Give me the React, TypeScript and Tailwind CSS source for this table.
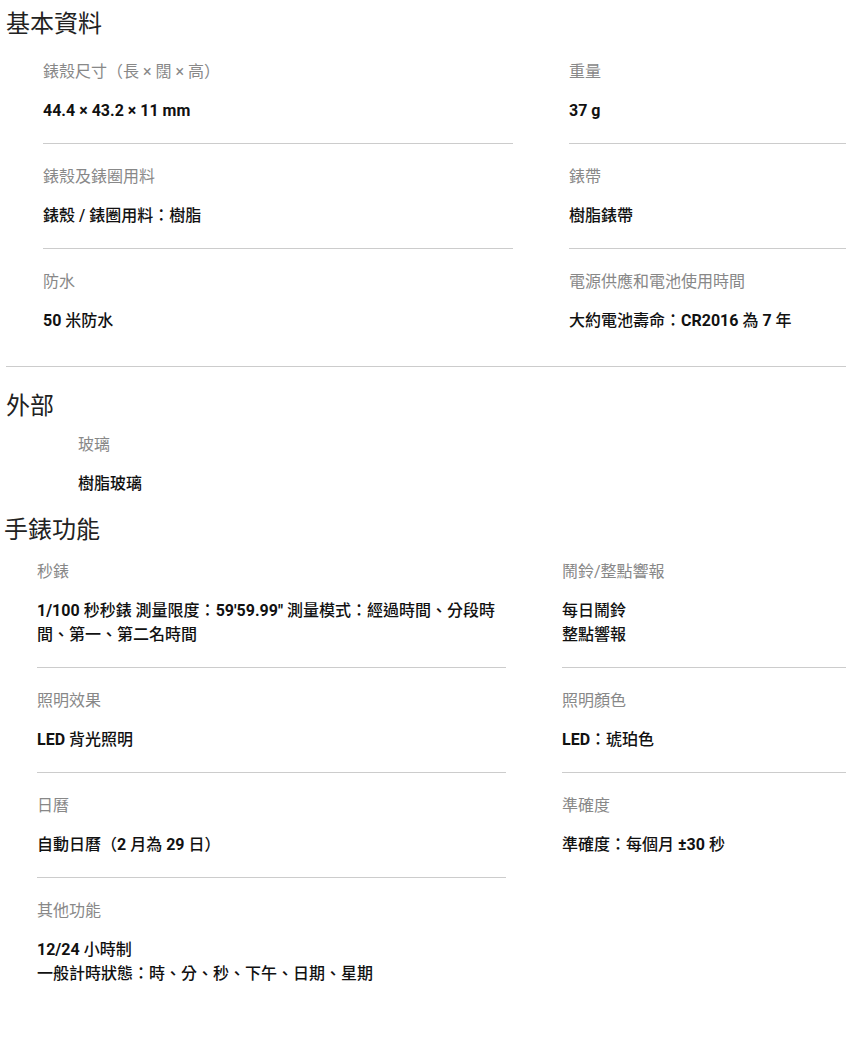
type Spec = { label: string; lines: string[] };

const basic: Spec[] = [
  { label: '錶殼尺寸（長 × 闊 × 高）', lines: ['44.4 × 43.2 × 11 mm'] },
  { label: '重量', lines: ['37 g'] },
  { label: '錶殼及錶圈用料', lines: ['錶殼 / 錶圈用料：樹脂'] },
  { label: '錶帶', lines: ['樹脂錶帶'] },
  { label: '防水', lines: ['50 米防水'] },
  { label: '電源供應和電池使用時間', lines: ['大約電池壽命：CR2016 為 7 年'] },
];

const functions: Spec[] = [
  {
    label: '秒錶',
    lines: ['1/100 秒秒錶 測量限度：59\'59.99" 測量模式：經過時間、分段時間、第一、第二名時間'],
  },
  { label: '鬧鈴/整點響報', lines: ['每日鬧鈴', '整點響報'] },
  { label: '照明效果', lines: ['LED 背光照明'] },
  { label: '照明顏色', lines: ['LED：琥珀色'] },
  { label: '日曆', lines: ['自動日曆（2 月為 29 日）'] },
  { label: '準確度', lines: ['準確度：每個月 ±30 秒'] },
  { label: '其他功能', lines: ['12/24 小時制', '一般計時狀態：時、分、秒、下午、日期、星期'] },
];

// bold latin runs, medium CJK, like the source site
const Value = ({ text }: { text: string }) => {
  const parts = text.split(/([0-9A-Za-z/.'"±×][0-9A-Za-z/.'"±× ]*[0-9A-Za-z/.'"±]|[0-9A-Za-z])/);
  return (
    <div>
      {parts.map((p, i) =>
        /[0-9A-Za-z]/.test(p) ? (
          <span key={i} className="font-bold">
            {p}
          </span>
        ) : (
          <span key={i}>{p}</span>
        ),
      )}
    </div>
  );
};

const Cell = ({ spec, first }: { spec: Spec; first: boolean }) => (
  <div className={first ? 'pb-[20px]' : 'border-t border-[#cccccc] pt-[21px] pb-[20px]'}>
    <div className="leading-6 text-[#888888]">{spec.label}</div>
    <div className="mt-[15px] leading-6 font-medium text-[#111111]">
      {spec.lines.map((l) => (
        <Value key={l} text={l} />
      ))}
    </div>
  </div>
);

const App = () => {
  return (
    <div className="min-h-[1038px] bg-white font-['Roboto','Noto_Sans_CJK_TC',sans-serif] text-base text-[#222222]">
      <section className="ml-[6px] border-b border-[#cccccc] pt-[8px] pb-[13px]">
        <h2 className="text-2xl leading-8 font-normal">基本資料</h2>
        <div className="mt-[20px] ml-[37px] grid grid-cols-[470px_277px] gap-x-[56px]">
          {basic.map((s, i) => (
            <Cell key={s.label} spec={s} first={i < 2} />
          ))}
        </div>
      </section>

      <section className="ml-[6px] mt-[23px]">
        <h2 className="text-2xl leading-8 font-normal">外部</h2>
        <div className="mt-[11px] ml-[72px]">
          <div className="leading-6 text-[#888888]">玻璃</div>
          <div className="mt-[15px] leading-6 font-medium text-[#111111]">樹脂玻璃</div>
        </div>
      </section>

      <section className="ml-[4px] mt-[18px]">
        <h2 className="text-2xl leading-8 font-normal">手錶功能</h2>
        <div className="mt-[14px] ml-[33px] grid grid-cols-[469px_284px] gap-x-[56px]">
          {functions.map((s, i) => (
            <Cell key={s.label} spec={s} first={i < 2} />
          ))}
        </div>
      </section>
    </div>
  );
};

export default App;
